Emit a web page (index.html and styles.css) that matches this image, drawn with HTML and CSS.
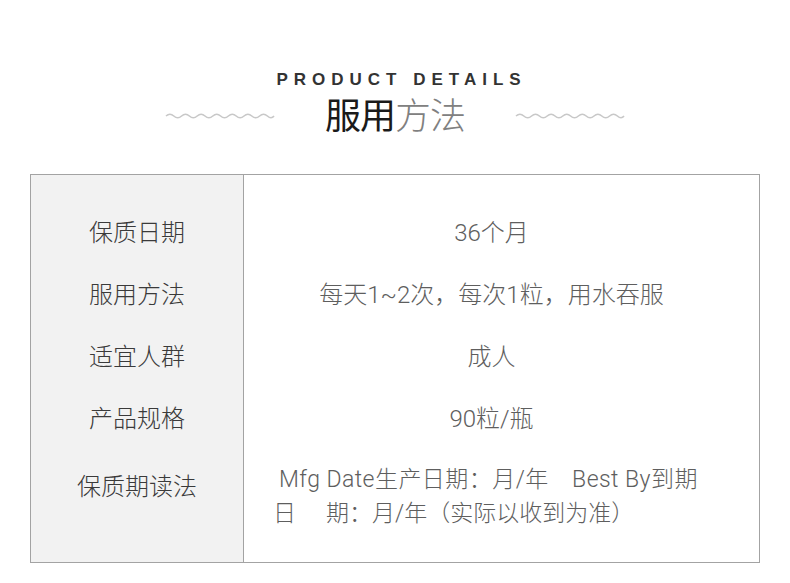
FILE: index.html
```html
<!DOCTYPE html>
<html lang="zh-CN">
<head>
<meta charset="utf-8">
<title>服用方法</title>
<link rel="stylesheet" href="styles.css">
</head>
<body>
<header class="head">
  <div class="eyebrow">PRODUCT DETAILS</div>
  <div class="title-row">
    <svg class="wave" width="110" height="8" viewBox="0 0 110 8"><path d="M1 4 Q4.9 0.5 8.8 4 T16.6 4 T24.4 4 T32.2 4 T40 4 T47.8 4 T55.6 4 T63.4 4 T71.2 4 T79 4 T86.8 4 T94.6 4 T102.4 4 T109 4" fill="none" stroke="#c8c8c8" stroke-width="1.6"/></svg>
    <h1 class="title"><span class="strong">服用</span><span class="light">方法</span></h1>
    <svg class="wave" width="110" height="8" viewBox="0 0 110 8"><path d="M1 4 Q4.9 0.5 8.8 4 T16.6 4 T24.4 4 T32.2 4 T40 4 T47.8 4 T55.6 4 T63.4 4 T71.2 4 T79 4 T86.8 4 T94.6 4 T102.4 4 T109 4" fill="none" stroke="#c8c8c8" stroke-width="1.6"/></svg>
  </div>
</header>
<section class="table">
  <div class="col labels">
    <div class="cell">保质日期</div>
    <div class="cell">服用方法</div>
    <div class="cell">适宜人群</div>
    <div class="cell">产品规格</div>
    <div class="cell last">保质期读法</div>
  </div>
  <div class="col values">
    <div class="cell">36个月</div>
    <div class="cell">每天1~2次，每次1粒，用水吞服</div>
    <div class="cell">成人</div>
    <div class="cell">90粒/瓶</div>
    <div class="cell last multi">
      <p class="line first-line">Mfg Date生产日期：月/年　Best By到期</p>
      <p class="line">日<span class="gap"></span>期：月/年（实际以收到为准）</p>
    </div>
  </div>
</section>
</body>
</html>
```
FILE: styles.css
```css
html, body {
  margin: 0;
  padding: 0;
  background: #ffffff;
}
body {
  font-family: "Noto Sans CJK SC", "Noto Sans", sans-serif;
  width: 790px;
  height: 583px;
  overflow: hidden;
}
.head {
  display: flex;
  flex-direction: column;
  align-items: center;
  padding-top: 70px;
}
.eyebrow {
  font-family: "Liberation Sans", Arial, sans-serif;
  font-weight: bold;
  font-size: 17px;
  line-height: 19px;
  letter-spacing: 6px;
  color: #333333;
  padding-left: 13px;
}
.title-row {
  display: flex;
  align-items: center;
  gap: 50px;
  margin-top: 2px;
}
.wave {
  display: block;
  margin-top: 6px;
}
.title {
  margin: 0;
  font-size: 36px;
  line-height: 44px;
  font-weight: normal;
  letter-spacing: -1px;
}
.title .strong {
  color: #1a1a1a;
  font-weight: 400;
}
.title .light {
  color: #808080;
  font-weight: 300;
}
.table {
  display: flex;
  margin: 39px 30px 0;
  border: 1px solid #a3a3a3;
  height: 387px;
}
.col {
  display: flex;
  flex-direction: column;
  padding-top: 24px;
}
.labels {
  width: 212px;
  background: #f2f2f2;
  border-right: 1px solid #a3a3a3;
  color: #3a3a3a;
}
.values {
  flex: 1;
  color: #5e5e5e;
  padding-right: 20px;
  font-family: Roboto, "Noto Sans CJK SC", sans-serif;
}
.cell {
  height: 62px;
  display: flex;
  align-items: center;
  justify-content: center;
  font-size: 24px;
  font-weight: 300;
}
.cell.last {
  height: 74px;
}
.cell.multi {
  flex-direction: column;
  align-items: flex-start;
  justify-content: flex-start;
  padding: 16px 0 0 29px;
  height: 58px;
  font-size: 23px;
}
.line {
  margin: 0;
  line-height: 34px;
  white-space: nowrap;
}
.first-line {
  padding-left: 6px;
  letter-spacing: 0.45px;
}
.gap {
  display: inline-block;
  width: 30px;
}
```
